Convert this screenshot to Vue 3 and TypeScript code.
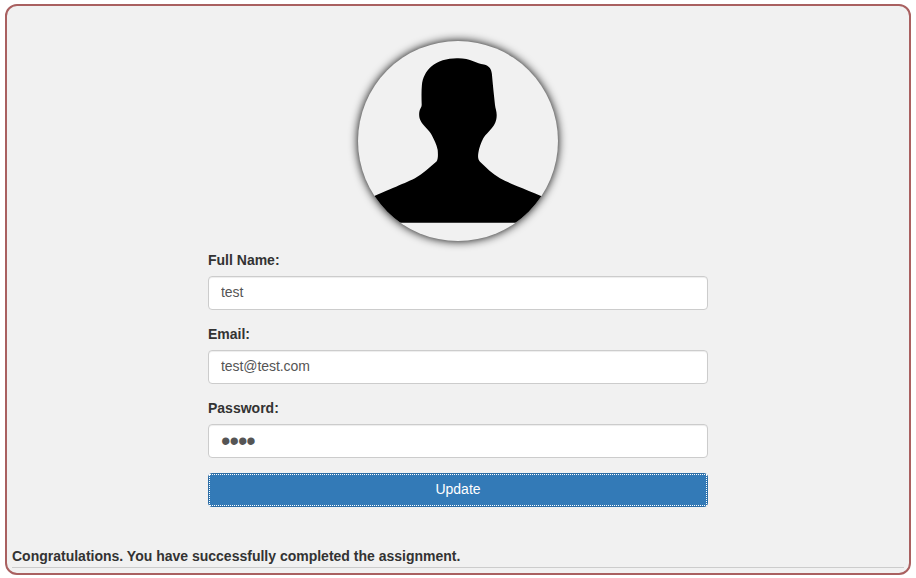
<script setup lang="ts">
import { ref } from 'vue'

const fullName = ref('test')
const email = ref('test@test.com')
const password = ref('test')
</script>

<template>
  <div class="page">
    <div class="frame">
      <div class="avatar">
        <svg viewBox="0 0 200 200" width="200" height="200" aria-hidden="true">
          <path
            d="M100.3 17.3C106 17.3 111 18.4 115.3 20.2C119 21.8 122 22.8 126 23.5C131 24.6 133.4 28 133.9 33C134.8 44 136 54 137 64C137.3 67.5 138.7 70 138.7 74C138.7 80 136.5 84 133.7 87.3C131 91 127.5 93.5 125.3 97.3C123 102 121 107 120.3 112.3C119.8 116 120 118.7 122 120.7C128 126.5 134 132.5 142 137.3C155 144 170 149 200 162V181.7H0V162C30 149 44 143.5 57 137.3C65 132.5 72 126 78.5 120.5C80.3 118 80 113 79.7 109C78.5 103 76 98.5 73.7 94C71 88.5 65 85 62.5 79.5C61 76.5 61 73.5 61.3 71C61.6 68 63.7 66.5 63.7 64C63.5 57 63.3 50 63.9 44C64.5 37 68 30 73 25.7C80 19.8 90 17 100.3 17.3Z"
          />
        </svg>
      </div>

      <form class="form" @submit.prevent>
        <div class="form-group">
          <label for="name">Full Name:</label>
          <input id="name" v-model="fullName" type="text" />
        </div>
        <div class="form-group">
          <label for="email">Email:</label>
          <input id="email" v-model="email" type="text" />
        </div>
        <div class="form-group">
          <label for="password">Password:</label>
          <input id="password" v-model="password" class="secret" type="password" />
        </div>
        <button class="btn" type="submit">Update</button>
      </form>

      <div class="footer">
        <p class="message">Congratulations. You have successfully completed the assignment.</p>
        <hr class="rule" />
      </div>
    </div>
  </div>
</template>

<style scoped>
.page {
  box-sizing: border-box;
  width: 916px;
  height: 578px;
  padding: 4px 5px;
  font-family: 'Liberation Sans', Arial, sans-serif;
  font-size: 14px;
  line-height: 20px;
  color: #333;
}

.frame {
  box-sizing: border-box;
  display: flex;
  flex-direction: column;
  align-items: center;
  width: 906px;
  height: 571px;
  padding-top: 35px;
  border: 2px solid #a96060;
  border-radius: 12px;
  background: #f1f1f1;
}

.avatar {
  width: 200px;
  height: 200px;
  margin-bottom: 9px;
  border-radius: 50%;
  overflow: hidden;
  background: #f1f1f1;
  box-shadow: 0 0 10px #000;
}

.avatar svg {
  display: block;
}

.form {
  width: 500px;
}

.form-group {
  margin-bottom: 14px;
}

label {
  display: block;
  margin-bottom: 6px;
  font-weight: 700;
}

input {
  box-sizing: border-box;
  display: block;
  width: 100%;
  height: 34px;
  padding: 5px 12px 7px;
  border: 1px solid #ccc;
  border-radius: 4px;
  background: #fff;
  box-shadow: inset 0 1px 1px rgba(0, 0, 0, 0.075);
  font: inherit;
  letter-spacing: -0.07px;
  color: #555;
}

/* bullets in the reference are much bigger than the text size */
.secret {
  padding: 4px 12px 4px;
  font-size: 27px;
  letter-spacing: -1px;
}

.btn {
  position: relative;
  box-sizing: border-box;
  display: block;
  width: 100%;
  height: 34px;
  margin-top: 15px;
  padding: 5px 12px 7px;
  border: 1px solid #2e6da4;
  border-radius: 4px;
  background: #337ab7;
  font: inherit;
  color: #fff;
}

/* focus ring, square corners */
.btn::after {
  content: '';
  position: absolute;
  inset: 0;
  border: 1px dotted #fff;
}

.footer {
  align-self: stretch;
  margin-top: auto;
  padding: 0 5px;
}

.message {
  margin: 0;
  font-weight: 700;
}

.rule {
  margin: 1px 0 5px;
  border: 0;
  border-top: 1px solid #ccc;
}
</style>
